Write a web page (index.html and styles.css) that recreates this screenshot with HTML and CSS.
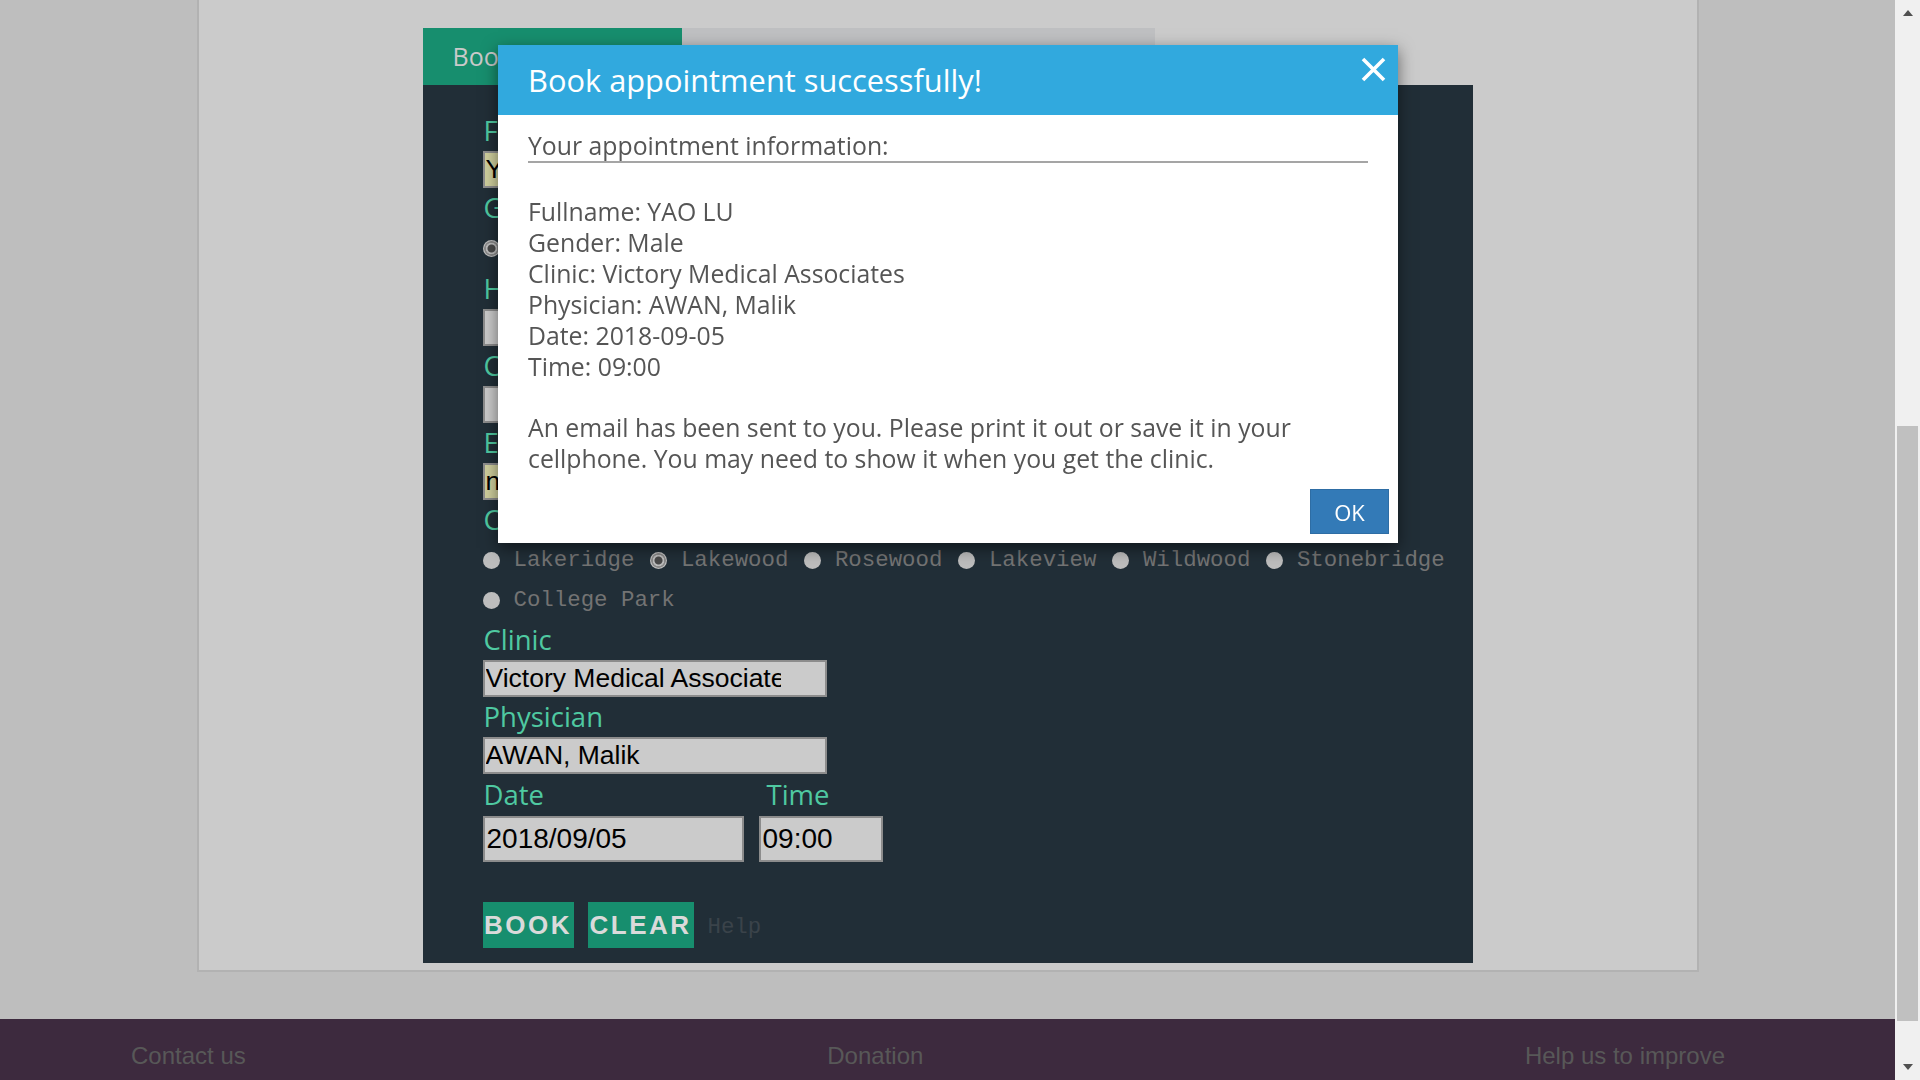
FILE: index.html
```html
<!DOCTYPE html>
<html lang="en">
<head>
<meta charset="utf-8">
<title>Book appointment</title>
<link rel="stylesheet" href="styles.css">
</head>
<body>
<div class="window">
  <div class="page">
    <main class="stage">
      <section class="container">
        <div class="booking">
          <div class="tabs">
            <div class="tab tab-active">Book appointment</div>
            <div class="tab tab-idle">Check appointment</div>
          </div>
          <form class="panel">
            <label class="lbl">Fullname</label>
            <input class="field autofill" value="YAO LU">
            <label class="lbl">Gender</label>
            <div class="choices gender">
              <span class="opt"><input type="radio" class="radio" name="g" checked><span class="opt-text">Male</span></span>
              <span class="opt"><input type="radio" class="radio" name="g"><span class="opt-text">Female</span></span>
            </div>
            <label class="lbl">Health Card Number</label>
            <input class="field" value="">
            <label class="lbl">Cellphone</label>
            <input class="field" value="">
            <label class="lbl">Email</label>
            <input class="field autofill" value="nlu@gmail.com">
            <label class="lbl">City</label>
            <div class="choices city">
              <span class="opt"><input type="radio" class="radio" name="c"><span class="opt-text">Lakeridge</span></span>
              <span class="opt"><input type="radio" class="radio" name="c" checked><span class="opt-text">Lakewood</span></span>
              <span class="opt"><input type="radio" class="radio" name="c"><span class="opt-text">Rosewood</span></span>
              <span class="opt"><input type="radio" class="radio" name="c"><span class="opt-text">Lakeview</span></span>
              <span class="opt"><input type="radio" class="radio" name="c"><span class="opt-text">Wildwood</span></span>
              <span class="opt"><input type="radio" class="radio" name="c"><span class="opt-text">Stonebridge</span></span>
              <span class="opt"><input type="radio" class="radio" name="c"><span class="opt-text">College Park</span></span>
            </div>
            <label class="lbl">Clinic</label>
            <input class="field field-clinic" value="Victory Medical Associates">
            <label class="lbl">Physician</label>
            <input class="field" value="AWAN, Malik">
            <div class="datetime">
              <div class="dt-col">
                <label class="lbl dt-lbl">Date</label>
                <input class="field field-date" value="2018/09/05">
              </div>
              <div class="dt-col">
                <label class="lbl dt-lbl time-lbl">Time</label>
                <input class="field field-time" value="09:00">
              </div>
            </div>
            <div class="actions">
              <button type="button" class="btn btn-book">BOOK</button>
              <button type="button" class="btn btn-clear">CLEAR</button>
              <span class="help">Help</span>
            </div>
          </form>
        </div>
      </section>
    </main>
    <footer class="footer">
      <span class="foot-link">Contact us</span>
      <span class="foot-link foot-mid">Donation</span>
      <span class="foot-link">Help us to improve</span>
    </footer>
  </div>
  <div class="scrollbar">
    <span class="arrow arrow-up"></span>
    <span class="thumb"></span>
    <span class="arrow arrow-down"></span>
  </div>
</div>

<div class="modal">
  <div class="modal-head">
    <h2 class="modal-title">Book appointment successfully!</h2>
    <button type="button" class="close" aria-label="Close">
      <svg viewBox="0 0 25 25" width="25" height="25"><path d="M2 2 L23 23 M23 2 L2 23" stroke="#ffffff" stroke-width="3.6" stroke-linecap="butt" fill="none"/></svg>
    </button>
  </div>
  <div class="modal-body">
    <div class="subtitle">Your appointment information:</div>
    <div class="info">
      <div>Fullname: YAO LU</div>
      <div>Gender: Male</div>
      <div>Clinic: Victory Medical Associates</div>
      <div>Physician: AWAN, Malik</div>
      <div>Date: 2018-09-05</div>
      <div>Time: 09:00</div>
    </div>
    <p class="note">An email has been sent to you. Please print it out or save it in your cellphone. You may need to show it when you get the clinic.</p>
  </div>
  <div class="modal-foot">
    <button type="button" class="ok">OK</button>
  </div>
</div>
</body>
</html>
```
FILE: styles.css
```css
html, body {
  margin: 0;
  padding: 0;
  height: 100%;
  overflow: hidden;
}
body {
  font-family: "Open Sans", "Noto Sans", sans-serif;
  background: #bebebe;
}
.window {
  display: flex;
  height: 1080px;
}
.page {
  flex: 1;
  min-width: 0;
  display: flex;
  flex-direction: column;
}
.stage {
  height: 1019px;
  background: #bebebe;
}
.container {
  width: 1498px;
  margin: 0 auto;
  background: #cbcbcb;
  border: 2px solid #b2b2b2;
  border-top: 0;
  padding: 28px 0 7px;
}
.booking {
  width: 1050px;
  margin: 0 auto;
}
.tabs {
  display: flex;
  height: 57px;
}
.tab {
  box-sizing: border-box;
  height: 57px;
  line-height: 57px;
  font-size: 25px;
  white-space: nowrap;
  overflow: hidden;
}
.tab-active {
  width: 259px;
  background: #178e6e;
  color: #cacaca;
  padding-left: 30px;
}
.tab-idle {
  width: 473px;
  background: #bfc0c2;
  color: #555;
  padding-left: 29px;
}
.panel {
  box-sizing: border-box;
  height: 878px;
  background: #212e37;
  padding: 26px 0 0 60px;
  display: flex;
  flex-direction: column;
  align-items: flex-start;
}
.lbl {
  display: block;
  font-size: 27.5px;
  line-height: 40px;
  height: 40px;
  color: #4fc9a1;
  padding-left: 1px;
}
.field {
  box-sizing: border-box;
  width: 344px;
  height: 37px;
  margin: 0;
  padding: 0 1px;
  border: 2px solid #8c8c8c;
  background: #cbcbcb;
  color: #000;
  font-family: "Liberation Sans", Arial, sans-serif;
  font-size: 26.5px;
}
.field-clinic {
  padding-right: 44px;
}
.autofill {
  background: #cfcf9d;
}
.choices {
  display: flex;
  flex-wrap: wrap;
  width: 990px;
}
.gender {
  height: 41px;
  align-items: center;
}
.opt {
  display: inline-flex;
  align-items: center;
  height: 40px;
}
.radio {
  appearance: none;
  -webkit-appearance: none;
  width: 17px;
  height: 17px;
  margin: 0 14px 0 0;
  border-radius: 50%;
  background: #bdbdbd;
}
.radio:checked {
  background: radial-gradient(circle, #4a4a4a 0 3.5px, #bdbdbd 4.5px 5.5px, #8a8a8a 6px 7px, #bdbdbd 7.5px);
}
.opt-text {
  font-family: "Liberation Mono", "Courier New", monospace;
  font-size: 22.4px;
  color: #737373;
  margin-right: 15.5px;
  white-space: nowrap;
}
.datetime {
  display: flex;
  gap: 15px;
}
.dt-col {
  display: flex;
  flex-direction: column;
}
.dt-lbl {
  height: 42px;
  line-height: 42px;
}
.time-lbl {
  padding-left: 8px;
}
.field-date,
.field-time {
  height: 46px;
  font-size: 28px;
  padding: 0 2px;
}
.field-date {
  width: 261px;
}
.field-time {
  width: 124px;
}
.actions {
  display: flex;
  align-items: center;
  margin-top: 40px;
  gap: 14px;
}
.btn {
  height: 46px;
  border: 0;
  padding: 0;
  background: #178e6e;
  color: #dadada;
  font-family: "Liberation Sans", Arial, sans-serif;
  font-weight: bold;
  font-size: 26px;
  letter-spacing: 2.5px;
  text-align: center;
}
.btn-book {
  width: 91px;
}
.btn-clear {
  width: 106px;
}
.help {
  font-family: "Liberation Mono", "Courier New", monospace;
  font-size: 22.4px;
  color: #3a434a;
  padding-top: 4px;
}
.footer {
  height: 61px;
  box-sizing: border-box;
  background: #3d2a3e;
  display: flex;
  align-items: center;
  justify-content: space-between;
  padding: 12px 170px 0 131px;
}
.foot-link {
  font-family: "Liberation Sans", Arial, sans-serif;
  font-size: 24px;
  color: #585858;
}
.foot-mid {
  margin-right: 20px;
}
.scrollbar {
  width: 25px;
  flex: none;
  background: #f0f0f0;
  display: flex;
  flex-direction: column;
  align-items: center;
}
.arrow {
  width: 0;
  height: 0;
  border-left: 5.5px solid transparent;
  border-right: 5.5px solid transparent;
}
.arrow-up {
  margin-top: 10px;
  border-bottom: 6px solid #505050;
}
.thumb {
  width: 21px;
  height: 595px;
  margin-top: 410px;
  background: #c0c0c0;
}
.arrow-down {
  margin-top: 43px;
  border-top: 6px solid #505050;
}

/* modal dialog */
.modal {
  position: fixed;
  left: 498px;
  top: 45px;
  width: 900px;
  background: #ffffff;
  box-shadow: 0 5px 15px rgba(0, 0, 0, 0.5);
}
.modal-head {
  position: relative;
  height: 70px;
  box-sizing: border-box;
  background: #31a9de;
  display: flex;
  align-items: center;
  padding: 0 30px;
}
.modal-title {
  margin: 0;
  font-weight: normal;
  font-size: 30.8px;
  color: #ffffff;
}
.close {
  position: absolute;
  top: 12px;
  right: 12px;
  width: 25px;
  height: 25px;
  padding: 0;
  border: 0;
  background: none;
  display: block;
}
.close svg {
  display: block;
}
.modal-body {
  padding: 15px 30px 0;
  font-size: 24.8px;
  line-height: 31px;
  color: #555555;
}
.subtitle {
  border-bottom: 2px solid #a5a5a5;
}
.info {
  margin-top: 33px;
}
.note {
  margin: 30px 0 0;
}
.modal-foot {
  display: flex;
  justify-content: flex-end;
  padding: 15px 9px 9px;
}
.ok {
  width: 79px;
  height: 45px;
  box-sizing: border-box;
  background: #337ab7;
  border: 1px solid #2e6da4;
  color: #ffffff;
  font-family: "Open Sans", "Noto Sans", sans-serif;
  font-size: 22px;
  padding: 0;
}
```
